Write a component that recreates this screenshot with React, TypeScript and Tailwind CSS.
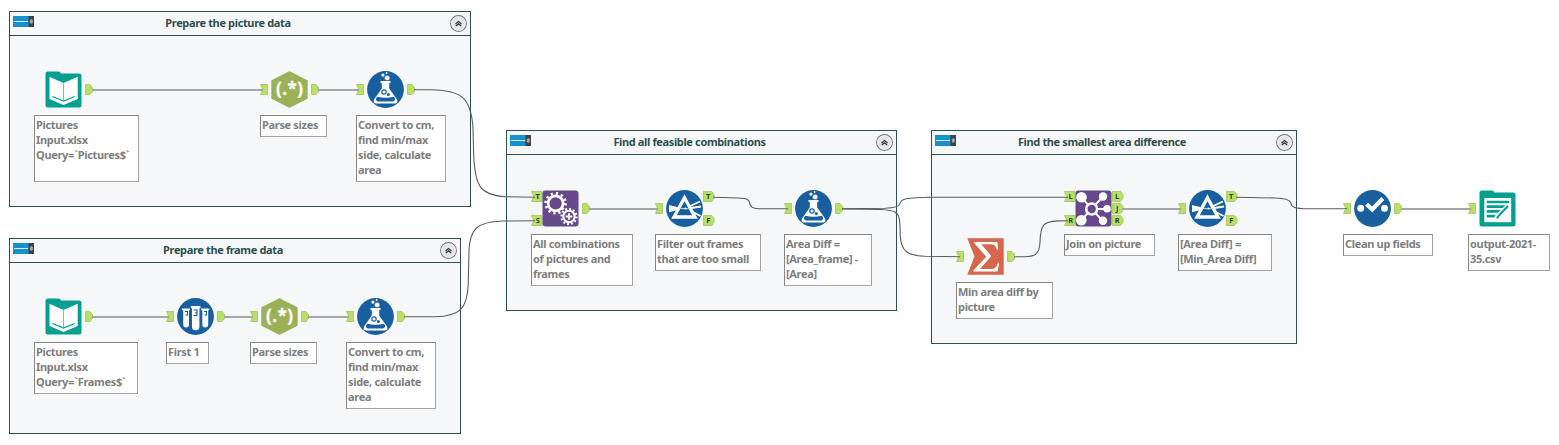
import type { ReactNode } from "react";

type Kind =
  | "input" | "output" | "regex" | "formula" | "sample"
  | "append" | "filter" | "summarize" | "join" | "select";

function Glyph({ kind }: { kind: Kind }) {
  switch (kind) {
    case "input":
      return (
        <>
          <path d="M3 .5H13.5Q15 .5 16 2.5H34Q36.5 2.5 36.5 5V34Q36.5 36.5 34 36.5H3Q.5 36.500 .5 34V3Q.5 .5 3 .5Z" fill="#049f8f" />
          <path d="M4.500 5.800L18.500 12L32.700 5.800V28L18.500 34L4.500 28Z" fill="#fff" />
          <path d="M7.500 25.500L18.500 30L29.700 25.500" fill="none" stroke="#049f8f" strokeWidth="1.300" />
          <path d="M18.500 11.500V29.500" stroke="#6cc2b9" strokeWidth="1" />
        </>
      );
    case "output":
      return (
        <>
          <path d="M3 .5H13Q14.500 .5 15.500 2.500H34Q36.500 2.500 36.500 5V34Q36.500 36.500 34 36.500H3Q.5 36.500 .5 34V3Q.5 .5 3 .5Z" fill="#049f8f" />
          <path d="M5.300 8H32.200V32.200H5.300Z" fill="#fff" />
          <path d="M7.800 12H30M7.800 16.700H29M7.800 21.400H24M7.800 26.100H19" stroke="#049f8f" strokeWidth="2.700" />
          <path d="M29.500 15.500L18.500 26L16.500 29.500" stroke="#fff" strokeWidth="4.200" fill="none" />
          <path d="M29 16L20 25.500L18 28.500" stroke="#049f8f" strokeWidth="2" fill="none" />
        </>
      );
    case "regex":
      return (
        <>
          <path d="M18.500 .5L36.300 9.500V27.500L18.500 36.500L.7 27.500V9.500Z" fill="#9bb158" stroke="#8fa850" strokeWidth=".6" />
          <text x="18.800" y="23.600" textAnchor="middle" fill="#fff" stroke="#fff" strokeWidth=".3" fontFamily="'Open Sans', 'Noto Sans', sans-serif" fontWeight="700" fontSize="17" letterSpacing=".5">(.*)</text>
        </>
      );
    case "formula":
      return (
        <>
          <circle cx="18.500" cy="18.500" r="18.400" fill="#175f9e" />
          <path d="M13.500 10H23.500V12H22.200V17.500L30 28.600Q31.500 32.500 27.500 32.600H9.500Q5.500 32.500 7 28.600L14.800 17.500V12H13.500Z" fill="#fff" />
          <path d="M10 25.800Q18.500 27.600 27.100 25.800Q29.500 29.500 26 30.400H11Q7.500 29.500 10 25.800Z" fill="#175f9e" />
          <circle cx="17" cy="21" r="2.200" fill="none" stroke="#175f9e" strokeWidth="1.200" />
          <circle cx="21.300" cy="23.500" r="1.500" fill="#175f9e" />
          <circle cx="20.200" cy="6.900" r="2.700" fill="#fff" stroke="#175f9e" strokeWidth=".6" />
          <circle cx="15.900" cy="4.100" r="1.600" fill="#fff" />
          <circle cx="19.600" cy="2" r=".9" fill="#fff" />
        </>
      );
    case "sample":
      return (
        <>
          <circle cx="18.500" cy="18.500" r="18.400" fill="#175f9e" />
          <path d="M5 10.500H13V12.300H12V26.500Q12 29.500 9.100 29.500Q6.200 29.500 6.200 26.500V12.300H5ZM24.200 10.500H32.200V12.300H31.200V26.500Q31.200 29.500 28.200 29.500Q25.300 29.500 25.300 26.500V12.300H24.200Z" fill="#fff" />
          <path d="M13.900 8H23.500V10.200H22.400V28.700Q22.400 32.300 18.700 32.300Q15 32.300 15 28.700V10.200H13.900Z" fill="#fff" />
          <path d="M8 13.500H10.500V17H8.500M27 13.500H29.500V17H27.500M16.500 12H20V17.500H16.500M18 14.700H20" fill="none" stroke="#175f9e" strokeWidth="1.100" />
        </>
      );
    case "append":
      return (
        <>
          <rect x=".5" y=".5" width="36" height="36" rx="3" fill="#67488b" />
          <circle cx="13.600" cy="13.300" r="9.800" fill="none" stroke="#fff" strokeWidth="3" strokeDasharray="2.200 2.931" />
          <circle cx="13.600" cy="13.300" r="7.500" fill="none" stroke="#fff" strokeWidth="2.700" />
          <circle cx="27" cy="26.500" r="9" fill="#67488b" />
          <circle cx="27" cy="26.500" r="7.500" fill="none" stroke="#fff" strokeWidth="2.300" strokeDasharray="1.800 2.127" />
          <circle cx="27" cy="26.500" r="5.700" fill="none" stroke="#fff" strokeWidth="2" />
          <path d="M27 23.200V29.800M23.700 26.500H30.300" stroke="#fff" strokeWidth="1.900" />
        </>
      );
    case "filter":
      return (
        <>
          <circle cx="18.500" cy="18.500" r="18.400" fill="#175f9e" />
          <path d="M3 15L14 17.800V19.200L3 22.300Z" fill="#fff" />
          <path d="M21 17.500L34 11.500M22 18.500L35 16.500M22 19.500L34.500 26" stroke="#fff" strokeWidth="1.900" />
          <path d="M18.500 7.800L29 27H8Z" fill="#175f9e" stroke="#fff" strokeWidth="3.300" />
          <path d="M13.500 18.400L24 18.700" stroke="#bcd0e4" strokeWidth="1.100" />
          <circle cx="19.500" cy="18.500" r="1" fill="#fff" />
        </>
      );
    case "summarize":
      return (
        <>
          <path d="M.3 .3H36.700V36.700H.3L7.500 18.500Z" fill="#d6674c" />
          <path d="M7.300 4H30.300L31.300 11.500H29.800Q28.800 6.300 24 6.200H14.300L24.300 18L13 31H25Q29.500 30.500 31 25H32.300L30.500 33.500H6.500V32.300L19.300 18.800L7.300 5.200Z" fill="#fff" />
        </>
      );
    case "join":
      return (
        <>
          <rect x=".5" y=".5" width="36" height="36" rx="3" fill="#67488b" />
          <path d="M6.500 7L16.500 19L6 30.500M28 6.500L16.500 19L28 31M16.500 19H32" stroke="#fff" strokeWidth="1.900" fill="none" />
          <circle cx="16.700" cy="19" r="5.500" fill="#67488b" stroke="#fff" strokeWidth="2.600" />
          <circle cx="6.500" cy="7.300" r="5.300" fill="#fff" />
          <circle cx="6.300" cy="30.300" r="5.300" fill="#fff" />
          <circle cx="28" cy="6.500" r="4.200" fill="#fff" />
          <circle cx="32" cy="18.700" r="3.800" fill="#fff" />
          <circle cx="28" cy="30.700" r="4.200" fill="#fff" />
        </>
      );
    default:
      return (
        <>
          <circle cx="18.500" cy="18.500" r="18.400" fill="#175f9e" />
          <circle cx="6.700" cy="18.300" r="3.500" fill="#fff" />
          <circle cx="30.500" cy="18.300" r="3.500" fill="#fff" />
          <path d="M12.300 14.200L18.300 20L28.800 9" fill="none" stroke="#175f9e" strokeWidth="6" />
          <path d="M12.600 14.200L18.300 19.500L28.800 8.500" fill="none" stroke="#fff" strokeWidth="4.200" />
        </>
      );
  }
}

function Tool({ kind, cx, cy }: { kind: Kind; cx: number; cy: number }) {
  return (
    <svg className="absolute" style={{ left: cx - 18.5, top: cy - 18.5 }} width="37" height="37" viewBox="0 0 37 37" aria-hidden="true">
      <Glyph kind={kind} />
    </svg>
  );
}

type PortData = { x: number; y: number; side: "in" | "out"; label?: string };

function Port({ x, y, side, label }: PortData) {
  const w = label ? 11 : 7.5;
  const d = side === "in"
    ? `M.5 .5H${w}V10.500H.5L2.800 5.500Z`
    : `M.5 .5H${w - 2.5}L${w} 3.500V7.500L${w - 2.5} 10.500H.5Z`;
  return (
    <svg className="absolute" style={{ left: x, top: y }} width="12" height="11" viewBox="0 0 12 11">
      <path d={d} fill="#b9e066" stroke="#9fc45a" strokeWidth=".8" />
      {label && (
        <text x={side === "in" ? 6.7 : 5.2} y="8.200" textAnchor="middle" fill="#23493c" fontFamily="'Noto Sans', sans-serif" fontWeight="700" fontSize="7.500">{label}</text>
      )}
    </svg>
  );
}

function Container({ box, title }: { box: string; title: string }) {
  return (
    <section className={`absolute flex flex-col border border-[#2f4f4f] bg-[#f5f7f9] ${box}`}>
      <header className="flex h-6 shrink-0 items-center border-b border-[#2f4f4f] pr-[3px] pl-[3px]">
        <svg className="mb-1 shrink-0" width="21" height="11" viewBox="0 0 21 11">
          <rect width="21" height="11" fill="#1791c9" />
          <rect x="15.500" width="5.500" height="11" fill="#404049" />
          <path d="M1 5.500H15" stroke="#d7edf7" strokeWidth="1" />
          <path d="M18.300 3L19.800 4.200V6.800L18.300 8L16.800 6.800V4.200Z" fill="#a6a6aa" />
        </svg>
        <h2 className="-ml-7 flex-1 pb-0.5 text-center text-[11px] leading-5 font-bold tracking-[-0.36px] whitespace-nowrap text-[#2f4f4f]">{title}</h2>
        <svg className="shrink-0" width="17" height="17" viewBox="0 0 17 17">
          <circle cx="8.500" cy="8.500" r="7.900" fill="#e3e5ea" stroke="#777" strokeWidth="1.100" />
          <circle cx="8.500" cy="8.500" r="6.900" fill="none" stroke="#f7f8fa" strokeWidth=".8" />
          <path d="M5.500 8.900L8.500 6.500L11.500 8.900M5.800 11L8.500 8.800L11.200 11" fill="none" stroke="#3c3c3c" strokeWidth="1.300" />
        </svg>
      </header>
    </section>
  );
}

function Note({ box, children }: { box: string; children: ReactNode }) {
  return (
    <p className={`absolute border border-t-[#858585] border-r-[#a3a3a3] border-b-[#a3a3a3] border-l-[#858585] bg-white pt-px pl-[1px] text-[11px] leading-[15px] font-bold tracking-[-0.32px] whitespace-pre text-[#7e7e7e] ${box}`}>
      {children}
    </p>
  );
}

const tools: { kind: Kind; cx: number; cy: number }[] = [
  { kind: "input", cx: 63.5, cy: 89.5 },
  { kind: "regex", cx: 289.3, cy: 89 },
  { kind: "formula", cx: 385.5, cy: 89.5 },
  { kind: "input", cx: 63.5, cy: 316.5 },
  { kind: "sample", cx: 195.4, cy: 316.5 },
  { kind: "regex", cx: 279.3, cy: 316 },
  { kind: "formula", cx: 375.5, cy: 316.5 },
  { kind: "append", cx: 560.8, cy: 208.5 },
  { kind: "filter", cx: 684.5, cy: 208.5 },
  { kind: "formula", cx: 813.5, cy: 208.5 },
  { kind: "summarize", cx: 985.6, cy: 256.7 },
  { kind: "join", cx: 1093.5, cy: 208.5 },
  { kind: "filter", cx: 1207.4, cy: 208.5 },
  { kind: "select", cx: 1372.4, cy: 208.5 },
  { kind: "output", cx: 1497.4, cy: 208.5 },
];

const ports: PortData[] = [
  { x: 85, y: 84, side: "out" },
  { x: 260, y: 84, side: "in" },
  { x: 311, y: 84, side: "out" },
  { x: 356, y: 84, side: "in" },
  { x: 407, y: 84, side: "out" },
  { x: 85, y: 311, side: "out" },
  { x: 166, y: 311, side: "in" },
  { x: 217, y: 311, side: "out" },
  { x: 250, y: 311, side: "in" },
  { x: 301, y: 311, side: "out" },
  { x: 346, y: 311, side: "in" },
  { x: 397, y: 311, side: "out" },
  { x: 531, y: 191, side: "in", label: "T" },
  { x: 531, y: 215, side: "in", label: "S" },
  { x: 582, y: 203, side: "out" },
  { x: 655, y: 203, side: "in" },
  { x: 703, y: 191, side: "out", label: "T" },
  { x: 703, y: 215, side: "out", label: "F" },
  { x: 784, y: 203, side: "in" },
  { x: 835, y: 203, side: "out" },
  { x: 956, y: 251, side: "in" },
  { x: 1007, y: 251, side: "out" },
  { x: 1064, y: 191, side: "in", label: "L" },
  { x: 1064, y: 215, side: "in", label: "R" },
  { x: 1112, y: 191, side: "out", label: "L" },
  { x: 1112, y: 203, side: "out", label: "J" },
  { x: 1112, y: 215, side: "out", label: "R" },
  { x: 1178, y: 203, side: "in" },
  { x: 1226, y: 191, side: "out", label: "T" },
  { x: 1226, y: 215, side: "out", label: "F" },
  { x: 1343, y: 203, side: "in" },
  { x: 1394, y: 203, side: "out" },
  { x: 1468, y: 203, side: "in" },
];

const straight =
  "M92 90H263M318 90H359M92 317H169M224 317H253M308 317H349M589 209H658M1122 209H1181M1401 209H1471";

const curves = [
  "M414 89.700H430C461 90 471 97 473 128L473.700 155C475 186 480 195 505 196.700L535 197.300",
  "M404 316.800H435C460 316 467 309 468.200 285L469 250C470 229 477 222 502 221L535 220.700",
  "M713 197.300L738 198C747 198.200 749.200 199.500 749.500 202.500C750 207.500 753 208.500 762 208.800H788",
  "M842 208.700L885 208.300C897 207.800 899.500 206 900 203.500C900.800 199 906 197.500 930 197.300H1068",
  "M842 208.900C880 208.900 890 209.300 895 212C900 215 900 220 900.200 235C901 252 908 255.500 925 256.300L960 256.700",
  "M1014 256.800H1025C1037 256.500 1039.500 252 1040 242C1040.500 225 1043 221.500 1058 220.900L1068 220.700",
  "M1236 197.300L1276 198C1287 198.200 1290 200 1290.800 203C1291.500 207.500 1295 208.500 1308 208.800H1347",
];

export default function App() {
  return (
    <main className="relative h-[445px] w-[1559px] overflow-hidden bg-white font-['Noto_Sans','Open_Sans',sans-serif]">
      <Container box="left-[9px] top-[11px] h-[196px] w-[462px]" title="Prepare the picture data" />
      <Container box="left-[9px] top-[238px] h-[196px] w-[452px]" title="Prepare the frame data" />
      <Container box="left-[506px] top-[130px] h-[181px] w-[391px]" title="Find all feasible combinations" />
      <Container box="left-[931px] top-[130px] h-[214px] w-[366px]" title="Find the smallest area difference" />

      {ports.map((p) => (
        <Port key={`${p.x}-${p.y}`} {...p} />
      ))}

      <svg className="absolute inset-0" width="1559" height="445" viewBox="0 0 1559 445" fill="none">
        <path d={straight} stroke="#a5a5a5" strokeWidth="2" />
        {curves.map((d) => (
          <path key={d} d={d} stroke="#5c5c5c" strokeWidth="1.100" />
        ))}
      </svg>

      {tools.map((t) => (
        <Tool key={`${t.cx}-${t.cy}`} {...t} />
      ))}

      <Note box="left-[34px] top-[115px] h-[67px] w-[105px]">{"Pictures\nInput.xlsx\nQuery=`Pictures$`"}</Note>
      <Note box="left-[260px] top-[115px] h-[22px] w-[67px]">Parse sizes</Note>
      <Note box="left-[356px] top-[115px] h-[67px] w-[90px]">{"Convert to cm,\nfind min/max\nside, calculate\narea"}</Note>
      <Note box="left-[34px] top-[342px] h-[52px] w-[104px]">{"Pictures\nInput.xlsx\nQuery=`Frames$`"}</Note>
      <Note box="left-[166px] top-[342px] h-[22px] w-[43px]">First 1</Note>
      <Note box="left-[250px] top-[342px] h-[22px] w-[67px]">Parse sizes</Note>
      <Note box="left-[346px] top-[342px] h-[67px] w-[90px]">{"Convert to cm,\nfind min/max\nside, calculate\narea"}</Note>
      <Note box="left-[531px] top-[234px] h-[52px] w-[102px]">{"All combinations\nof pictures and\nframes"}</Note>
      <Note box="left-[655px] top-[234px] h-[37px] w-[106px]">{"Filter out frames\nthat are too small"}</Note>
      <Note box="left-[784px] top-[234px] h-[52px] w-[88px]">{"Area Diff =\n[Area_frame] -\n[Area]"}</Note>
      <Note box="left-[956px] top-[282px] h-[37px] w-[97px]">{"Min area diff by\npicture"}</Note>
      <Note box="left-[1064px] top-[234px] h-[22px] w-[91px]">Join on picture</Note>
      <Note box="left-[1178px] top-[234px] h-[37px] w-[94px]">{"[Area Diff] =\n[Min_Area Diff]"}</Note>
      <Note box="left-[1343px] top-[234px] h-[22px] w-[90px]">Clean up fields</Note>
      <Note box="left-[1468px] top-[234px] h-[37px] w-[82px]">{"output-2021-\n35.csv"}</Note>
    </main>
  );
}
